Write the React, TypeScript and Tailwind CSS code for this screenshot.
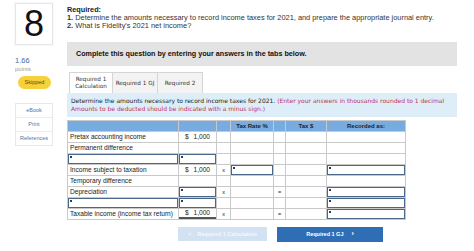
import React from 'react';

const cols = 'grid-cols-[111px_38px_14px_43px_12px_41px_79px]';

const Inp = () => (
  <div className="relative h-full w-full border border-[#4a6689] bg-white">
    <span className="absolute left-[1px] top-[1px] h-[2px] w-[1.5px] bg-[#1d3f73]" />
  </div>
);

const Cell = ({ children, className = '' }: { children?: React.ReactNode; className?: string }) => (
  <div className={`h-[11px] border-b border-r border-[#c9c9c9] flex items-center overflow-hidden ${className}`}>{children}</div>
);

const Money = ({ under = false }: { under?: boolean }) => (
  <div className={`flex h-full w-full items-center justify-between px-[6px] ${under ? 'border-b-2 border-double border-[#555]' : ''}`}>
    <span>$</span>
    <span>1,000</span>
  </div>
);

type Row = (React.ReactNode | null)[];

const rows: Row[] = [
  ['Pretax accounting income', 'money', null, null, null, null, null],
  ['Permanent difference', null, null, null, null, null, null],
  ['input', 'input', null, null, null, null, null],
  ['Income subject to taxation', 'money', 'x', 'input', null, null, 'input'],
  ['Temporary difference', null, null, null, null, null, null],
  ['Depreciation', 'input', 'x', null, '=', null, 'input'],
  ['input', 'input', null, null, null, null, 'input'],
  ['Taxable income (income tax return)', 'moneyU', 'x', null, '=', null, 'input'],
];

export default function App() {
  return (
    <div className="flex h-[251px] w-[474px] overflow-hidden bg-white font-['Liberation_Sans',sans-serif] text-[#222]">
      {/* left rail */}
      <div className="flex w-[67px] shrink-0 flex-col items-start pl-[15px] pt-[3px]">
        <div className="flex h-[42px] w-[38px] items-center justify-center border border-[#e6e6e6] shadow-[0_0_2px_rgba(0,0,0,0.08)]">
          <span className="text-[36px] leading-none font-light text-[#111]">8</span>
        </div>
        <div className="mt-[12px] text-[7.5px] leading-[8px] text-[#3d6fa8]">1.66</div>
        <div className="mt-[1px] text-[6px] leading-[7px] text-[#9a9a9a]">points</div>
        <div className="ml-[3px] mt-[3px] flex h-[13px] w-[33px] items-center justify-center rounded-full bg-[#f6d13c] text-[5.5px] text-[#5a4a10]">
          Skipped
        </div>
        <div className="mt-[14px] flex w-[38px] flex-col border border-[#e8e8e8] text-[5.5px] text-[#4a76a8]">
          <div className="flex h-[14px] items-center justify-center border-b border-[#ececec]">eBook</div>
          <div className="flex h-[14px] items-center justify-center border-b border-[#ececec]">Print</div>
          <div className="flex h-[13px] items-center justify-center">References</div>
        </div>
      </div>

      {/* main */}
      <div className="flex w-[407px] shrink-0 flex-col pt-[6px]">
        <div className="text-[7.3px] leading-[8px] font-bold text-[#222]">Required:</div>
        <div className="whitespace-nowrap text-[7.4px] leading-[8px] text-[#333]">
          <b>1.</b> Determine the amounts necessary to record income taxes for 2021, and prepare the appropriate journal entry.
        </div>
        <div className="text-[7.4px] leading-[8px] text-[#333]">
          <b>2.</b> What is Fidelity's 2021 net income?
        </div>

        <div className="mt-[12px] flex h-[24px] w-[390px] items-center bg-[#e3e3e3] pl-[9px] text-[7.2px] font-bold text-[#111]">
          Complete this question by entering your answers in the tabs below.
        </div>

        <div className="mt-[6px] flex h-[21px] font-['DejaVu_Sans',sans-serif] text-[5.7px] text-[#333]">
          <div className="ml-[2px] flex w-[44px] flex-col items-center justify-center border border-b-0 border-[#d5d5d5] bg-white leading-[7px]">
            <span>Required 1</span>
            <span>Calculation</span>
          </div>
          <div className="flex w-[45px] items-center justify-center border-t border-r border-[#d5d5d5] bg-[#f3f3f3]">Required 1 GJ</div>
          <div className="flex w-[45px] items-center justify-center border-t border-r border-[#d5d5d5] bg-[#f3f3f3]">Required 2</div>
        </div>

        <div className="flex h-[24px] w-[390px] flex-col justify-center whitespace-nowrap bg-[#ddeef8] pl-[4px] font-['DejaVu_Sans',sans-serif] text-[6px] leading-[8px]">
          <div className="text-[#222]">
            Determine the amounts necessary to record income taxes for 2021.{' '}
            <span className="text-[#c0325a]">(Enter your answers in thousands rounded to 1 decimal</span>
          </div>
          <div className="text-[#c0325a]">Amounts to be deducted should be indicated with a minus sign.)</div>
        </div>

        <div className={`mt-[3px] grid ${cols} w-[339px] border-l border-t border-[#c9c9c9] text-[6.6px] text-[#222]`}>
          <Cell className="bg-[#78ace0] border-[#a9c9ea]" />
          <Cell className="bg-[#78ace0] border-[#a9c9ea]" />
          <Cell className="bg-[#78ace0] border-[#a9c9ea]" />
          <Cell className="bg-[#78ace0] border-[#a9c9ea] justify-center font-bold text-[6px]">Tax Rate %</Cell>
          <Cell className="bg-[#78ace0] border-[#a9c9ea]" />
          <Cell className="bg-[#78ace0] border-[#a9c9ea] justify-center font-bold text-[6px]">Tax $</Cell>
          <Cell className="bg-[#78ace0] border-[#a9c9ea] justify-center font-bold text-[6px]">Recorded as:</Cell>
          {rows.map((r, i) =>
            r.map((c, j) => {
              if (c === 'input') return <Cell key={`${i}-${j}`}><Inp /></Cell>;
              if (c === 'money') return <Cell key={`${i}-${j}`}><Money /></Cell>;
              if (c === 'moneyU') return <Cell key={`${i}-${j}`}><Money under /></Cell>;
              if (c === 'x' || c === '=')
                return <Cell key={`${i}-${j}`} className="justify-center text-[5.5px]">{c}</Cell>;
              return (
                <Cell key={`${i}-${j}`} className="pl-[2px] whitespace-nowrap">
                  {c}
                </Cell>
              );
            })
          )}
        </div>

        <div className="mt-[7px] flex gap-[10px] pl-[111px] text-[5.5px] font-bold text-white">
          <div className="flex h-[14px] w-[89px] items-center justify-center gap-[6px] bg-[#d3e2f2] text-[#f4f8fc]">
            <span>&lt;</span>
            <span>Required 1 Calculation</span>
          </div>
          <div className="flex h-[15px] w-[106px] items-center justify-center gap-[8px] bg-[#2f6eb5]">
            <span>Required 1 GJ</span>
            <span className="text-[7px]">&rsaquo;</span>
          </div>
        </div>
      </div>
    </div>
  );
}
